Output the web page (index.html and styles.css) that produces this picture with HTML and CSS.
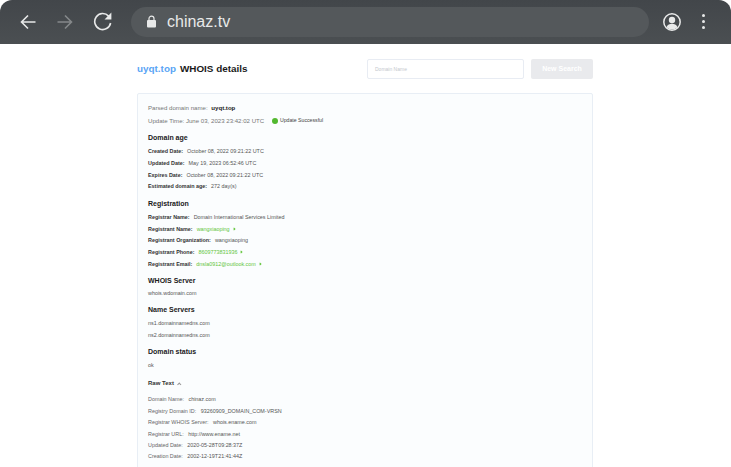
FILE: index.html
```html
<!DOCTYPE html>
<html lang="en">
<head>
<meta charset="utf-8">
<title>WHOIS details</title>
<link rel="stylesheet" href="styles.css">
</head>
<body>
<div class="window">
  <header class="toolbar">
    <svg class="nav nav-back" width="18" height="18" viewBox="0 0 18 18"><path d="M16.500 9H2.500M9 2.500L2.500 9L9 15.500" fill="none" stroke="#e8e9e9" stroke-width="1.600"/></svg>
    <svg class="nav nav-forward" width="18" height="18" viewBox="0 0 18 18"><path d="M1.500 9H15.500M9 2.500L15.500 9L9 15.500" fill="none" stroke="#85888a" stroke-width="1.600"/></svg>
    <svg class="nav nav-reload" width="20" height="20" viewBox="0 0 20 20"><path d="M15.600 5.100A8 8 0 1 0 17.600 12" fill="none" stroke="#e8e9e9" stroke-width="1.600"/><path d="M18.400 1.500V8.400H11.500Z" fill="#e8e9e9"/></svg>
    <div class="omnibox">
      <svg class="lock" width="11" height="13" viewBox="0 0 11 13"><path d="M3 5.500V3.600a2.500 2.500 0 0 1 5 0v1.900" fill="none" stroke="#e8e9e9" stroke-width="1.200"/><rect x="1" y="5" width="9" height="7.500" rx="1" fill="#e8e9e9"/></svg>
      <span class="url">chinaz.tv</span>
    </div>
    <svg class="avatar" width="20" height="20" viewBox="0 0 20 20"><circle cx="10" cy="10" r="8.200" fill="none" stroke="#e8e9e9" stroke-width="1.500"/><circle cx="10" cy="8" r="3.200" fill="#e8e9e9"/><path d="M4.500 15.200c1-2.600 3.200-3.400 5.500-3.400s4.500.8 5.500 3.400a8 8 0 0 1-11 0Z" fill="#e8e9e9"/></svg>
    <div class="kebab"><i></i><i></i><i></i></div>
  </header>

  <main class="page">
    <div class="head">
      <h1 class="title"><span class="domain">uyqt.top</span><span>WHOIS details</span></h1>
      <div class="search">
        <div class="input">Domain Name</div>
        <div class="button">New Search</div>
      </div>
    </div>

    <section class="card">
      <p class="line parsed">Parsed domain name: <b>uyqt.top</b></p>
      <p class="line update">Update Time: June 03, 2023 23:42:02 UTC <span class="ok"><i class="dot"></i>Update Successful</span></p>

      <h2>Domain age</h2>
      <p class="row"><b>Created Date:</b>October 08, 2022 09:21:22 UTC</p>
      <p class="row"><b>Updated Date:</b>May 19, 2023 06:52:46 UTC</p>
      <p class="row"><b>Expires Date:</b>October 08, 2022 09:21:22 UTC</p>
      <p class="row"><b>Estimated domain age:</b>272 day(s)</p>

      <h2>Registration</h2>
      <p class="row"><b>Registrar Name:</b>Domain International Services Limited</p>
      <p class="row"><b>Registrant Name:</b><span class="link">wangxiaoping<i class="chev"></i></span></p>
      <p class="row"><b>Registrant Organization:</b>wangxiaoping</p>
      <p class="row"><b>Registrant Phone:</b><span class="link">8609773831936<i class="chev"></i></span></p>
      <p class="row"><b>Registrant Email:</b><span class="link">dnsla0912@outlook.com<i class="chev"></i></span></p>

      <h2>WHOIS Server</h2>
      <p class="row plain">whois.wdomain.com</p>

      <h2>Name Servers</h2>
      <p class="row">ns1.domainnamedns.com</p>
      <p class="row">ns2.domainnamedns.com</p>

      <h2>Domain status</h2>
      <p class="row">ok</p>

      <h3>Raw Text<i class="caret"></i></h3>
      <p class="raw">Domain Name: <span>chinaz.com</span></p>
      <p class="raw">Registry Domain ID: <span>93260909_DOMAIN_COM-VRSN</span></p>
      <p class="raw">Registrar WHOIS Server: <span>whois.ename.com</span></p>
      <p class="raw">Registrar URL: <span>http://www.ename.net</span></p>
      <p class="raw">Updated Date: <span>2020-05-28T09:28:37Z</span></p>
      <p class="raw">Creation Date: <span>2002-12-19T21:41:44Z</span></p>
    </section>
  </main>
</div>
</body>
</html>
```
FILE: styles.css
```css
* { box-sizing: border-box; }
html, body {
  margin: 0;
  height: 467px;
  overflow: hidden;
  background: #fff;
  font-family: "Liberation Sans", Arial, sans-serif;
}
.window { height: 467px; overflow: hidden; }
.toolbar {
  height: 44px;
  background: linear-gradient(#42464a, #4b4f52);
  border-radius: 12px 12px 0 0;
  display: flex;
  align-items: center;
  padding: 0 0 0 19px;
}
.nav { flex: none; }
.nav-back { margin-top: -1px; }
.nav-forward { margin-left: 19px; margin-top: -1px; }
.nav-reload { margin-left: 19px; margin-top: -2px; }
.omnibox {
  flex: none;
  width: 518px;
  height: 30px;
  margin-left: 18px;
  margin-top: -1px;
  background: #54585b;
  border-radius: 15px;
  display: flex;
  align-items: center;
  padding-left: 15px;
}
.lock { flex: none; }
.url {
  margin-left: 10px;
  font-size: 16px;
  color: #e8e9e9;
}
.avatar { flex: none; margin-left: 13px; margin-top: -1px; }
.kebab { flex: none; margin-left: 20px; margin-top: -1px; display: flex; flex-direction: column; gap: 3px; }
.kebab i { display: block; width: 3px; height: 3px; border-radius: 50%; background: #e8e9e9; }

.page { width: 456px; margin: 0 0 0 137px; }
.head {
  height: 49px;
  display: flex;
  align-items: center;
  justify-content: space-between;
}
.title { margin: 0; font-size: 9.900px; display: flex; gap: 4px; font-weight: 700; color: #1a1a1a; }
.domain { color: #5aa5f5; }
.search { display: flex; gap: 7px; }
.input {
  width: 157px;
  height: 20px;
  border: 1px solid #e8ecf3;
  border-radius: 2px;
  padding-left: 7px;
  font-size: 5px;
  line-height: 18px;
  color: #c4c8cd;
}
.button {
  width: 62px;
  height: 20px;
  background: #e9eaed;
  border-radius: 2px;
  color: #fff;
  font-size: 7px;
  font-weight: 700;
  line-height: 20px;
  text-align: center;
}
.card {
  height: 390px;
  border: 1px solid #e8eef5;
  border-radius: 2px;
  background: #fbfdfe;
  padding: 9px 10px;
  color: #333;
}
p { margin: 0; }
.line { font-size: 6.100px; color: #777; }
.parsed { line-height: 9px; }
.parsed b { color: #1a1a1a; margin-left: 2px; }
.update { line-height: 9px; margin-top: 4px; display: flex; align-items: center; gap: 6px; white-space: pre; }
.ok { display: inline-flex; align-items: center; gap: 2px; font-size: 5.200px; color: #444; }
.dot { display: block; width: 6px; height: 6px; border-radius: 50%; background: #52b82f; }
h2 {
  margin: 8.400px 0 6px;
  font-size: 7px;
  line-height: 9px;
  font-weight: 700;
  color: #1a1a1a;
}
.row { font-size: 5.400px; line-height: 7px; margin-bottom: 4.700px; color: #555; }
.row b { color: #333; margin-right: 4px; }
.link { color: #63c53d; }
.chev {
  display: inline-block;
  width: 2px;
  height: 2px;
  margin: 0 0 0.500px 3px;
  border-top: 0.600px solid #63c53d;
  border-right: 0.600px solid #63c53d;
  transform: rotate(45deg);
}
.plain { margin-top: -1px; }
h3 {
  margin: 10px 0 9px;
  font-size: 6px;
  line-height: 8px;
  font-weight: 700;
  color: #333;
}
.caret {
  display: inline-block;
  width: 2.500px;
  height: 2.500px;
  margin: 0 0 0 4px;
  border-top: 0.600px solid #999;
  border-left: 0.600px solid #999;
  transform: rotate(45deg);
}
.raw { font-size: 5.400px; line-height: 7px; margin-bottom: 4.400px; color: #666; }
.raw span { margin-left: 3px; color: #555; }
```
